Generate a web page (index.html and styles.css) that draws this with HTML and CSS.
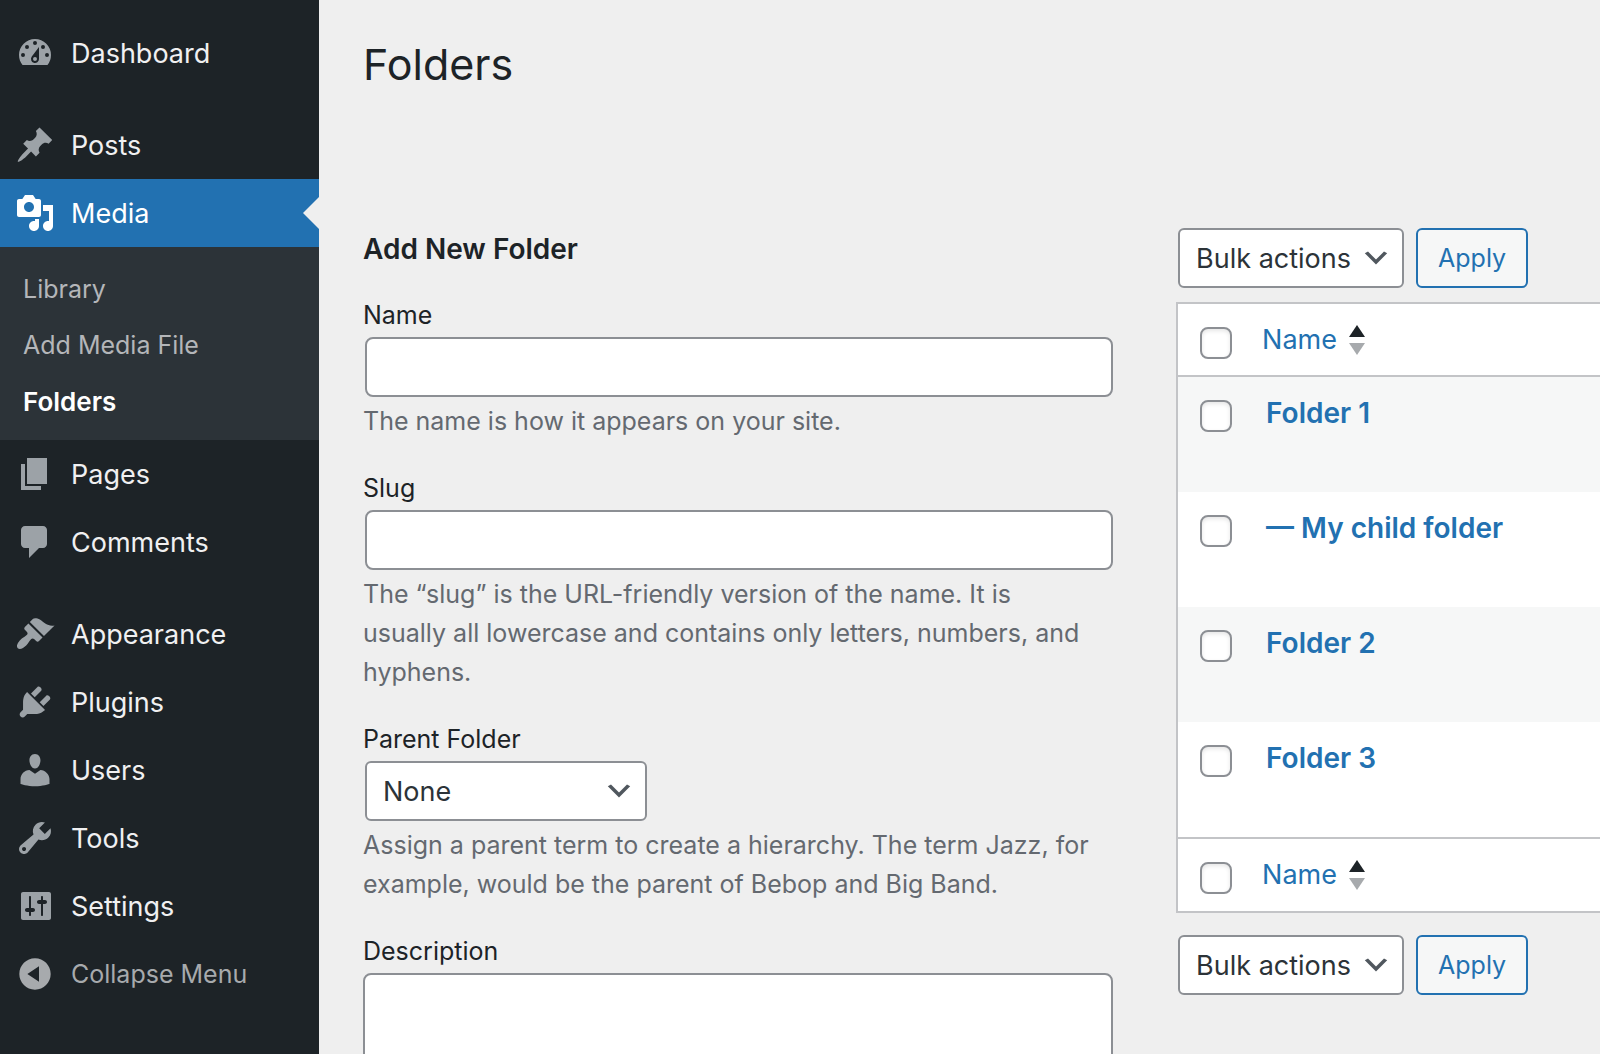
FILE: index.html
```html
<!DOCTYPE html>
<html lang="en">
<head>
<meta charset="utf-8">
<title>Folders</title>
<link rel="stylesheet" href="styles.css">
</head>
<body>
<div class="shell">
  <nav class="sidebar" aria-label="Main menu">
    <ul class="menu">
      <li><a class="menu-link" href="#"><svg class="icon" viewBox="0 0 20 20" aria-hidden="true"><path fill-rule="evenodd" d="M3.76 16h12.48A7.98 7.98 0 0 0 18 11a8 8 0 0 0-16 0c0 1.9.66 3.64 1.76 5zM10 4a1 1 0 1 1 0 2 1 1 0 0 1 0-2zM6 6a1 1 0 1 1 0 2 1 1 0 0 1 0-2zm8 0a1 1 0 1 1 0 2 1 1 0 0 1 0-2zM4 10a1 1 0 1 1 0 2 1 1 0 0 1 0-2zm12 0a1 1 0 1 1 0 2 1 1 0 0 1 0-2zm-4-3v6a2 2 0 1 1-3.6-1.200zM10 12a1 1 0 1 0 0 2 1 1 0 0 0 0-2z"/></svg>Dashboard</a></li>
      <li class="separator" role="presentation"></li>
      <li><a class="menu-link" href="#"><svg class="icon" viewBox="0 0 20 20" aria-hidden="true"><path d="M10.44 3.02l1.82-1.82 6.36 6.35-1.83 1.82c-1.05-.68-2.48-.57-3.41.36l-.75.75c-.92.93-1.04 2.35-.35 3.41l-1.83 1.82-2.41-2.41-2.8 2.79c-.42.42-3.38 2.71-3.8 2.29s1.86-3.39 2.28-3.81l2.79-2.79L4.1 9.36l1.83-1.82c1.05.69 2.48.57 3.4-.36l.75-.75c.93-.92 1.05-2.35.36-3.41z"/></svg>Posts</a></li>
      <li>
        <a class="menu-link current" href="#"><svg class="icon" viewBox="0 0 20 20" aria-hidden="true"><path d="M13 11V4c0-.55-.45-1-1-1h-1.67L9 1H5L3.67 3H2c-.55 0-1 .45-1 1v7c0 .55.45 1 1 1h10c.55 0 1-.45 1-1zM7 4.500c1.380 0 2.500 1.120 2.500 2.500S8.380 9.500 7 9.500 4.500 8.380 4.500 7 5.620 4.500 7 4.500zM14 6h5v10.500c0 1.380-1.120 2.500-2.500 2.500S14 17.880 14 16.500s1.120-2.500 2.500-2.500c.17 0 .34.02.5.05V9h-3V6zm-4 8.050V13h2v3.500c0 1.380-1.120 2.500-2.500 2.500S7 17.880 7 16.500 8.120 14 9.500 14c.17 0 .34.02.5.05z"/></svg>Media</a>
        <ul class="submenu">
          <li><a class="submenu-link" href="#">Library</a></li>
          <li><a class="submenu-link" href="#">Add Media File</a></li>
          <li><a class="submenu-link active" href="#" aria-current="page">Folders</a></li>
        </ul>
      </li>
      <li><a class="menu-link" href="#"><svg class="icon" viewBox="0 0 20 20" aria-hidden="true"><path d="M6 15V2h10v13H6zm-1 1h8v2H3V5h2v11z"/></svg>Pages</a></li>
      <li><a class="menu-link" href="#"><svg class="icon" viewBox="0 0 20 20" aria-hidden="true"><path d="M5 2h9c1.100 0 2 .9 2 2v7c0 1.100-.9 2-2 2h-2l-5 5v-5H5c-1.100 0-2-.9-2-2V4c0-1.100.9-2 2-2z"/></svg>Comments</a></li>
      <li class="separator" role="presentation"></li>
      <li><a class="menu-link" href="#"><svg class="icon" viewBox="0 0 20 20" aria-hidden="true"><path d="M14.480 11.060L7.410 3.990l1.500-1.500c.5-.56 2.300-.47 3.510.32 1.210.8 1.430 1.280 2.910 2.100 1.180.64 2.450 1.260 4.450.85zm-.71.71L6.700 4.700 4.930 6.470c-.39.39-.39 1.020 0 1.410l1.060 1.060c.39.39.39 1.030 0 1.420-.6.6-1.430 1.110-2.210 1.690-.35.26-.7.53-1.010.84C1.430 14.230.4 16.080 1.400 17.070c.99 1 2.840-.03 4.180-1.360.31-.31.58-.66.85-1.020.57-.78 1.080-1.610 1.690-2.210.39-.39 1.020-.39 1.410 0l1.060 1.060c.39.39 1.020.39 1.410 0z"/></svg>Appearance</a></li>
      <li><a class="menu-link" href="#"><svg class="icon" viewBox="0 0 20 20" aria-hidden="true"><path d="M13.110 4.360L9.870 7.600 8 5.730l3.240-3.240c.35-.34 1.050-.2 1.560.32.52.51.66 1.210.31 1.550zm-8 1.770l.91-1.120 9.010 9.010-1.190.84c-.71.71-2.630 1.160-3.820 1.160H6.140L4.900 17.260c-.59.59-1.540.59-2.120 0-.59-.58-.59-1.530 0-2.120l1.240-1.240v-3.880c0-1.130.4-3.190 1.090-3.890zm7.260 3.970l3.240-3.240c.34-.35 1.040-.21 1.550.31.52.51.66 1.210.31 1.550l-3.240 3.250z"/></svg>Plugins</a></li>
      <li><a class="menu-link" href="#"><svg class="icon" viewBox="0 0 20 20" aria-hidden="true"><path d="M10 9.250c-2.270 0-2.730-3.440-2.730-3.440C7 4.020 7.820 2 9.970 2c2.160 0 2.980 2.020 2.710 3.810 0 0-.41 3.440-2.680 3.440zm0 2.570L12.720 10c2.390 0 4.520 2.330 4.520 4.530v2.490s-3.650 1.130-7.240 1.130c-3.650 0-7.240-1.130-7.240-1.130v-2.490c0-2.250 1.940-4.480 4.470-4.480z"/></svg>Users</a></li>
      <li><a class="menu-link" href="#"><svg class="icon" viewBox="0 0 20 20" aria-hidden="true"><path d="M16.680 9.770c-1.340 1.340-3.300 1.670-4.950.99l-5.410 6.520c-.99.99-2.590.99-3.580 0s-.99-2.590 0-3.570l6.520-5.420c-.68-1.650-.35-3.610.99-4.950 1.280-1.280 3.120-1.620 4.720-1.060l-2.890 2.890 2.820 2.820 2.860-2.870c.53 1.580.18 3.390-1.080 4.650zM3.810 16.210c.4.39 1.040.39 1.430 0 .4-.4.4-1.040 0-1.430-.39-.4-1.030-.4-1.430 0-.39.39-.39 1.030 0 1.430z"/></svg>Tools</a></li>
      <li><a class="menu-link" href="#"><svg class="icon" viewBox="0 0 20 20" aria-hidden="true"><path d="M18 16V4c0-.55-.45-1-1-1H4c-.55 0-1 .45-1 1v12c0 .55.45 1 1 1h13c.55 0 1-.45 1-1zM8 11h1c.55 0 1 .45 1 1s-.45 1-1 1H8v1.500c0 .28-.22.5-.5.5s-.5-.22-.5-.5V13H6c-.55 0-1-.45-1-1s.45-1 1-1h1V5.500c0-.28.22-.5.5-.5s.5.22.5.5V11zm5-2h-1c-.55 0-1-.45-1-1s.45-1 1-1h1V5.500c0-.28.22-.5.5-.5s.5.22.5.5V7h1c.55 0 1 .45 1 1s-.45 1-1 1h-1v5.500c0 .28-.22.5-.5.5s-.5-.22-.5-.5V9z"/></svg>Settings</a></li>
      <li><button class="collapse" type="button"><svg class="icon" viewBox="0 0 20 20" aria-hidden="true"><path d="M10 2.160c4.330 0 7.840 3.510 7.840 7.840s-3.510 7.840-7.840 7.840S2.160 14.330 2.160 10 5.710 2.160 10 2.160zm2 11.720V6.120L6.180 9.970z"/></svg><span>Collapse Menu</span></button></li>
    </ul>
  </nav>

  <main class="content">
    <h1 class="page-title">Folders</h1>
    <div class="columns">
      <form class="folder-form">
        <h2 class="form-title">Add New Folder</h2>
        <div class="field">
          <label for="name">Name</label>
          <input class="control" id="name" type="text">
          <p class="hint">The name is how it appears on your site.</p>
        </div>
        <div class="field">
          <label for="slug">Slug</label>
          <input class="control" id="slug" type="text">
          <p class="hint">The “slug” is the URL-friendly version of the name. It is usually all lowercase and contains only letters, numbers, and hyphens.</p>
        </div>
        <div class="field">
          <label for="parent">Parent Folder</label>
          <div class="select select-parent">
            <select class="control" id="parent"><option>None</option></select>
            <svg class="chevron" viewBox="0 0 20 20" aria-hidden="true"><path d="M5 6l5 5 5-5 2 1-7 7-7-7 2-1z"/></svg>
          </div>
          <p class="hint">Assign a parent term to create a hierarchy. The term Jazz, for example, would be the parent of Bebop and Big Band.</p>
        </div>
        <div class="field">
          <label for="description">Description</label>
          <textarea class="control area" id="description" rows="5"></textarea>
        </div>
      </form>

      <section class="list" aria-label="Folder list">
        <div class="bulk">
          <div class="select select-bulk">
            <select class="control" aria-label="Select bulk action"><option>Bulk actions</option></select>
            <svg class="chevron" viewBox="0 0 20 20" aria-hidden="true"><path d="M5 6l5 5 5-5 2 1-7 7-7-7 2-1z"/></svg>
          </div>
          <button class="button" type="button">Apply</button>
        </div>
        <table class="table">
          <thead>
            <tr>
              <td class="check"><input type="checkbox" aria-label="Select all"></td>
              <th scope="col"><a class="sort" href="#">Name<svg class="sort-icon" viewBox="0 0 16 30" aria-hidden="true"><path class="up" d="M8 0l8 12H0z"/><path class="down" d="M0 18h16L8 30z"/></svg></a></th>
            </tr>
          </thead>
          <tbody>
            <tr><td class="check"><input type="checkbox" aria-label="Select Folder 1"></td><td><a class="row-title" href="#">Folder 1</a></td></tr>
            <tr><td class="check"><input type="checkbox" aria-label="Select My child folder"></td><td><a class="row-title" href="#">— My child folder</a></td></tr>
            <tr><td class="check"><input type="checkbox" aria-label="Select Folder 2"></td><td><a class="row-title" href="#">Folder 2</a></td></tr>
            <tr><td class="check"><input type="checkbox" aria-label="Select Folder 3"></td><td><a class="row-title" href="#">Folder 3</a></td></tr>
          </tbody>
          <tfoot>
            <tr>
              <td class="check"><input type="checkbox" aria-label="Select all"></td>
              <th scope="col"><a class="sort" href="#">Name<svg class="sort-icon" viewBox="0 0 16 30" aria-hidden="true"><path class="up" d="M8 0l8 12H0z"/><path class="down" d="M0 18h16L8 30z"/></svg></a></th>
            </tr>
          </tfoot>
        </table>
        <div class="bulk">
          <div class="select select-bulk">
            <select class="control" aria-label="Select bulk action"><option>Bulk actions</option></select>
            <svg class="chevron" viewBox="0 0 20 20" aria-hidden="true"><path d="M5 6l5 5 5-5 2 1-7 7-7-7 2-1z"/></svg>
          </div>
          <button class="button" type="button">Apply</button>
        </div>
      </section>
    </div>
  </main>
</div>
</body>
</html>
```
FILE: styles.css
```css
:root {
  --bg: #efefef;
  --ink: #1d2327;
  --muted: #646970;
  --blue: #2271b1;
  --line: #c3c4c7;
  --edge: #8c8f94;
  --text-s: 25px;
  --text-m: 27px;
  --text-l: 28px;
}

* { box-sizing: border-box; }

body {
  margin: 0;
  background: var(--bg);
  color: var(--ink);
  font-family: Inter, "Liberation Sans", sans-serif;
  font-size: var(--text-s);
  line-height: 39px;
}

h1, h2, p, ul { margin: 0; padding: 0; }
ul { list-style: none; }
a { color: inherit; text-decoration: none; }
input, select, textarea, button { margin: 0; font: inherit; }

.shell {
  display: grid;
  grid-template-columns: 319px minmax(0, 1fr);
  min-height: 100vh;
}

/* Sidebar */
.sidebar {
  padding: 19px 0;
  background: var(--ink);
  color: #f0f0f1;
}
.menu-link, .collapse {
  display: flex;
  align-items: center;
  gap: 16px;
  width: 100%;
  height: 68px;
  padding: 0 15px;
  font-size: var(--text-m);
}
.icon {
  flex: none;
  width: 40px;
  height: 40px;
  fill: #9ca2a7;
}
.separator { height: 24px; }
.current {
  position: relative;
  background: var(--blue);
  color: #fff;
}
.current .icon { fill: #fff; }
.current::after {
  content: "";
  position: absolute;
  top: 18px;
  right: 0;
  border: 16px solid transparent;
  border-left-width: 0;
  border-right-color: var(--bg);
}
.submenu {
  padding: 14px 0 11px;
  background: #2c3338;
}
.submenu-link {
  display: block;
  padding: 9px 23px 8px;
  color: #b4b6b9;
}
.submenu-link.active {
  color: #fff;
  font-size: 26px;
  font-weight: 600;
}
.collapse {
  border: 0;
  background: none;
  color: #a7aaad;
  font-size: var(--text-s);
}
.collapse .icon { fill: #a7aaad; }

/* Page */
.content { padding: 32px 0 0 44px; }
.page-title {
  font-size: 43px;
  font-weight: 400;
  line-height: 64px;
}
.columns {
  display: grid;
  grid-template-columns: 23fr 13fr;
  gap: 63px;
  margin-top: 132px;
}

/* Form */
.folder-form {
  display: flex;
  flex-direction: column;
  gap: 28px;
}
.form-title {
  margin-bottom: -2px;
  font-size: var(--text-l);
  font-weight: 600;
  line-height: 42px;
}
.field { display: flex; flex-direction: column; }
.control {
  height: 60px;
  border: 2px solid var(--edge);
  border-radius: 8px;
  background: #fff;
  color: #2c3338;
  font-size: var(--text-m);
}
.field > .control, .field > .select { margin: 2px 0 5px 2px; }
.field > .area {
  height: auto;
  margin-left: 0;
  padding: 4px 12px;
  resize: none;
}
.hint {
  padding-right: 20px;
  color: var(--muted);
}

.select { display: grid; align-items: center; }
.select > * { grid-area: 1 / 1; }
.select select {
  width: 100%;
  padding: 0 48px 0 16px;
  border-radius: 6px;
  appearance: none;
}
.select-parent { width: 282px; }
.select-bulk { width: 226px; }
.chevron {
  justify-self: end;
  width: 32px;
  height: 32px;
  margin-right: 12px;
  fill: #50575e;
  pointer-events: none;
}

/* List */
.bulk { display: flex; gap: 12px; padding-left: 2px; }
.button {
  height: 60px;
  padding: 0 20px;
  border: 2px solid var(--blue);
  border-radius: 6px;
  background: #f6f7f7;
  color: var(--blue);
}
.table {
  width: 100%;
  margin: 14px 0 22px;
  border: 2px solid var(--line);
  border-right: 0;
  border-spacing: 0;
  background: #fff;
  table-layout: fixed;
}
.table th, .table td {
  padding: 17px 4px 16px;
  font-size: var(--text-m);
  text-align: left;
  vertical-align: top;
}
.table th {
  padding-top: 16px;
  padding-left: 0;
  font-weight: 400;
  color: var(--blue);
}
.table .check { width: 84px; padding: 23px 22px 0; line-height: 0; }
.table thead tr { height: 72px; }
.table tfoot tr { height: 74px; }
.table thead > tr > * { border-bottom: 2px solid var(--line); }
.table tfoot > tr > * { border-top: 2px solid var(--line); }
.table tbody tr { height: 115px; }
.table tbody tr:nth-child(odd) { background: #f6f7f7; }
.check input {
  width: 32px;
  height: 32px;
  border: 2px solid var(--edge);
  border-radius: 8px;
  background: #fff;
  box-shadow: inset 0 2px 4px rgba(0, 0, 0, .1);
  appearance: none;
}
.sort { display: inline-flex; align-items: center; gap: 12px; }
.sort-icon { width: 16px; height: 30px; }
.up { fill: var(--ink); }
.down { fill: #a7aaad; }
.row-title {
  color: var(--blue);
  font-size: var(--text-l);
  font-weight: 600;
}
```
